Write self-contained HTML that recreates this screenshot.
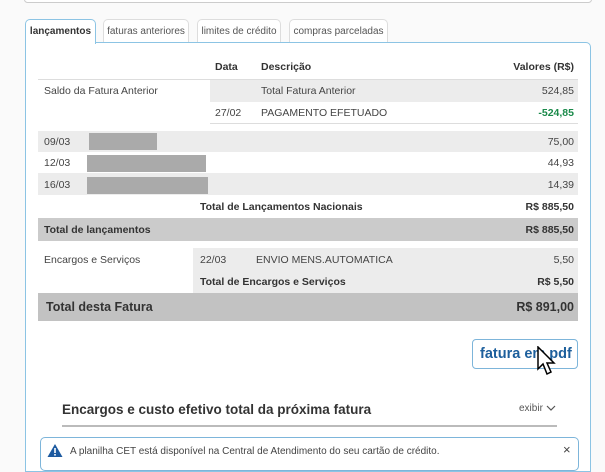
<!DOCTYPE html>
<html><head><meta charset="utf-8"><style>
*{margin:0;padding:0;box-sizing:border-box}
body{width:605px;height:464px;overflow:hidden;background:#fafafa;font-family:"Liberation Sans",sans-serif;font-size:10.5px;color:#444;position:relative}
.a{position:absolute;white-space:nowrap}
.tab{position:absolute;top:19px;height:23px;border:1px solid #ddd;border-bottom:none;border-radius:5px 5px 0 0;background:#fff;font-size:10px;padding-top:6px;text-align:center;color:#555;white-space:nowrap}
.r{position:absolute;right:31px}
.g{background:#ececec}
.blk{position:absolute;background:#aaa;height:17px}
b{font-weight:bold;color:#333}
</style></head><body>
<div class="a" style="left:24px;top:-4px;width:568px;height:7px;border:1px solid #ccc;border-radius:4px;background:#fff"></div>
<div class="a" style="left:25px;top:42px;width:566px;height:430px;border:1.5px solid #8cc4e4;border-radius:0 5px 0 0;background:#fff"></div>
<div class="tab" style="left:25px;width:71px;border:1.5px solid #8cc4e4;border-bottom:none;height:25px;color:#333;font-weight:bold;z-index:2">lançamentos</div>
<div class="tab" style="left:103px;width:86px">faturas anteriores</div>
<div class="tab" style="left:197px;width:84px">limites de crédito</div>
<div class="tab" style="left:289px;width:99px">compras parceladas</div>

<div class="a" style="left:215px;top:61px"><b>Data</b></div>
<div class="a" style="left:261px;top:61px"><b>Descrição</b></div>
<div class="r a" style="top:61px"><b>Valores (R$)</b></div>
<div class="a" style="left:38px;top:79px;width:540px;height:1px;background:#ddd"></div>

<div class="a g" style="left:210px;top:80px;width:368px;height:22px"></div>
<div class="a" style="left:44px;top:85px">Saldo da Fatura Anterior</div>
<div class="a" style="left:261px;top:85px">Total Fatura Anterior</div>
<div class="r a" style="top:85px">524,85</div>
<div class="a" style="left:215px;top:107px">27/02</div>
<div class="a" style="left:261px;top:107px">PAGAMENTO EFETUADO</div>
<div class="r a" style="top:107px;color:#1a8a4a;font-weight:bold">-524,85</div>
<div class="a" style="left:210px;top:123px;width:368px;height:1px;background:#ddd"></div>

<div class="a g" style="left:38px;top:131px;width:540px;height:21px"></div>
<div class="a g" style="left:38px;top:173px;width:540px;height:22px"></div>
<div class="a" style="left:44px;top:136px">09/03</div><div class="blk" style="left:89px;top:133px;width:68px"></div><div class="r a" style="top:136px">75,00</div>
<div class="a" style="left:44px;top:157px">12/03</div><div class="blk" style="left:87px;top:155px;width:119px"></div><div class="r a" style="top:157px">44,93</div>
<div class="a" style="left:44px;top:179px">16/03</div><div class="blk" style="left:87px;top:177px;width:121px"></div><div class="r a" style="top:179px">14,39</div>

<div class="a" style="left:200px;top:201px"><b>Total de Lançamentos Nacionais</b></div>
<div class="r a" style="top:201px"><b>R$ 885,50</b></div>
<div class="a" style="left:38px;top:218px;width:540px;height:23px;background:#cbcbcb"></div>
<div class="a" style="left:44px;top:224px"><b>Total de lançamentos</b></div>
<div class="r a" style="top:224px"><b>R$ 885,50</b></div>

<div class="a g" style="left:193px;top:248px;width:385px;height:45px"></div>
<div class="a" style="left:44px;top:254px">Encargos e Serviços</div>
<div class="a" style="left:200px;top:254px">22/03</div>
<div class="a" style="left:256px;top:254px">ENVIO MENS.AUTOMATICA</div>
<div class="r a" style="top:254px">5,50</div>
<div class="a" style="left:200px;top:276px"><b>Total de Encargos e Serviços</b></div>
<div class="r a" style="top:276px"><b>R$ 5,50</b></div>
<div class="a" style="left:38px;top:293px;width:540px;height:28px;background:#c2c2c2"></div>
<div class="a" style="left:46px;top:300px;font-size:12.5px"><b>Total desta Fatura</b></div>
<div class="r a" style="top:300px;font-size:12.5px"><b>R$ 891,00</b></div>

<div class="a" style="left:472px;top:339px;width:106px;height:30px;border:1.5px solid #7db5da;border-radius:4px;color:#1d5f9c;font-weight:bold;font-size:14.5px;padding:6px 0 0 7px">fatura em pdf</div>
<svg class="a" style="left:536px;top:346px" width="22" height="32" viewBox="0 0 22 32"><path d="M2 1 L2 23 L7 18 L11 28 L15 26 L11 17 L18 17 Z" fill="#fff" stroke="#000" stroke-width="1.5"/></svg>

<div class="a" style="left:62px;top:402px;font-size:13.5px"><b>Encargos e custo efetivo total da próxima fatura</b></div>
<div class="a" style="left:519px;top:403px;font-size:10px;color:#555">exibir</div>
<svg class="a" style="left:546px;top:405px" width="10" height="7"><path d="M1 1 L5 5 L9 1" fill="none" stroke="#555" stroke-width="1.2"/></svg>
<div class="a" style="left:62px;top:425px;width:495px;height:1.5px;background:#bbb"></div>

<div class="a" style="left:40px;top:437px;width:539px;height:34px;border:1.5px solid #7db5da;border-radius:5px;background:#fff"></div>
<svg class="a" style="left:47px;top:443px" width="16" height="15"><path d="M8 1 L15.5 14 L0.5 14 Z" fill="#1d5aa0"/><rect x="7.2" y="5" width="1.6" height="5" fill="#fff"/><rect x="7.2" y="11" width="1.6" height="1.6" fill="#fff"/></svg>
<div class="a" style="left:70px;top:446px;font-size:10px;color:#444">A planilha CET está disponível na Central de Atendimento do seu cartão de crédito.</div>
<div class="a" style="left:563px;top:442px;font-size:13px;color:#444">×</div>
</body></html>
